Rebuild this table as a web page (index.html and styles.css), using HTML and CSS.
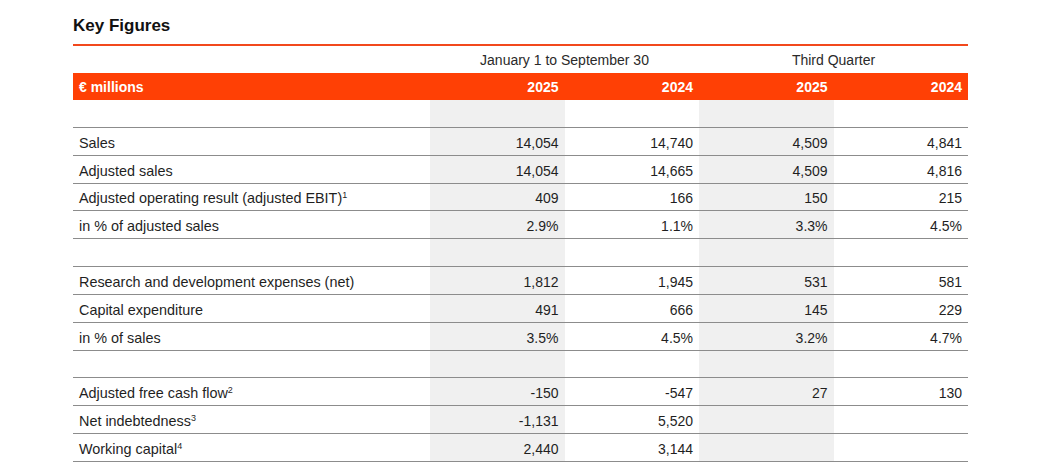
FILE: index.html
```html
<!DOCTYPE html>
<html lang="en">
<head>
<meta charset="utf-8">
<title>Key Figures</title>
<link rel="stylesheet" href="styles.css">
</head>
<body>
<div class="page">
  <h1 class="title">Key Figures</h1>
  <table class="kf">
    <colgroup>
      <col class="c-label">
      <col class="c-num">
      <col class="c-num">
      <col class="c-num">
      <col class="c-num">
    </colgroup>
    <thead>
      <tr class="group">
        <th></th>
        <th colspan="2">January 1 to September 30</th>
        <th colspan="2">Third Quarter</th>
      </tr>
      <tr class="bar">
        <th class="lbl">€ millions</th>
        <th>2025</th>
        <th>2024</th>
        <th>2025</th>
        <th>2024</th>
      </tr>
    </thead>
    <tbody>
      <tr class="blank"><td></td><td class="g"></td><td></td><td class="g"></td><td></td></tr>
      <tr><td>Sales</td><td class="g">14,054</td><td>14,740</td><td class="g">4,509</td><td>4,841</td></tr>
      <tr><td>Adjusted sales</td><td class="g">14,054</td><td>14,665</td><td class="g">4,509</td><td>4,816</td></tr>
      <tr><td>Adjusted operating result (adjusted EBIT)<sup>1</sup></td><td class="g">409</td><td>166</td><td class="g">150</td><td>215</td></tr>
      <tr><td>in % of adjusted sales</td><td class="g">2.9%</td><td>1.1%</td><td class="g">3.3%</td><td>4.5%</td></tr>
      <tr class="blank"><td></td><td class="g"></td><td></td><td class="g"></td><td></td></tr>
      <tr><td>Research and development expenses (net)</td><td class="g">1,812</td><td>1,945</td><td class="g">531</td><td>581</td></tr>
      <tr><td>Capital expenditure</td><td class="g">491</td><td>666</td><td class="g">145</td><td>229</td></tr>
      <tr><td>in % of sales</td><td class="g">3.5%</td><td>4.5%</td><td class="g">3.2%</td><td>4.7%</td></tr>
      <tr class="blank"><td></td><td class="g"></td><td></td><td class="g"></td><td></td></tr>
      <tr><td>Adjusted free cash flow<sup>2</sup></td><td class="g">-150</td><td>-547</td><td class="g">27</td><td>130</td></tr>
      <tr><td>Net indebtedness<sup>3</sup></td><td class="g">-1,131</td><td>5,520</td><td class="g"></td><td></td></tr>
      <tr><td>Working capital<sup>4</sup></td><td class="g">2,440</td><td>3,144</td><td class="g"></td><td></td></tr>
    </tbody>
  </table>
</div>
</body>
</html>
```

FILE: styles.css
```css
html, body {
  margin: 0;
  padding: 0;
  background: #ffffff;
}

body {
  font-family: "Liberation Sans", Arial, sans-serif;
  color: #1f1f1f;
}

.page {
  padding: 14px 0 0 73px;
  width: 895px;
}

.title {
  margin: 0;
  font-size: 17px;
  line-height: 24px;
  font-weight: 700;
  color: #111;
  padding-bottom: 6px;
  border-bottom: 2px solid #f2481c;
}

.kf {
  width: 895px;
  table-layout: fixed;
  border-collapse: collapse;
  font-size: 14px;
}

.c-label { width: 357px; }
.c-num { width: 134.5px; }

.kf th,
.kf td {
  padding: 0 6px;
  text-align: right;
  white-space: nowrap;
}

.group th {
  height: 27px;
  font-weight: 400;
  text-align: center;
  color: #2a2a2a;
}

.bar th {
  height: 27px;
  background: #ff4005;
  color: #ffffff;
  font-weight: 700;
  font-size: 14px;
}

.bar th.lbl {
  text-align: left;
}

.kf tbody td {
  height: 23.85px;
  padding-top: 3px;
  border-bottom: 1px solid #8c8c8c;
  color: #1f1f1f;
}

.kf tbody td:first-child {
  text-align: left;
  font-size: 14.4px;
}

.kf tbody td.g {
  background: #f0f0f0;
}

sup {
  font-size: 9px;
  line-height: 0;
  vertical-align: 5px;
  color: #1f1f1f;
}
```
